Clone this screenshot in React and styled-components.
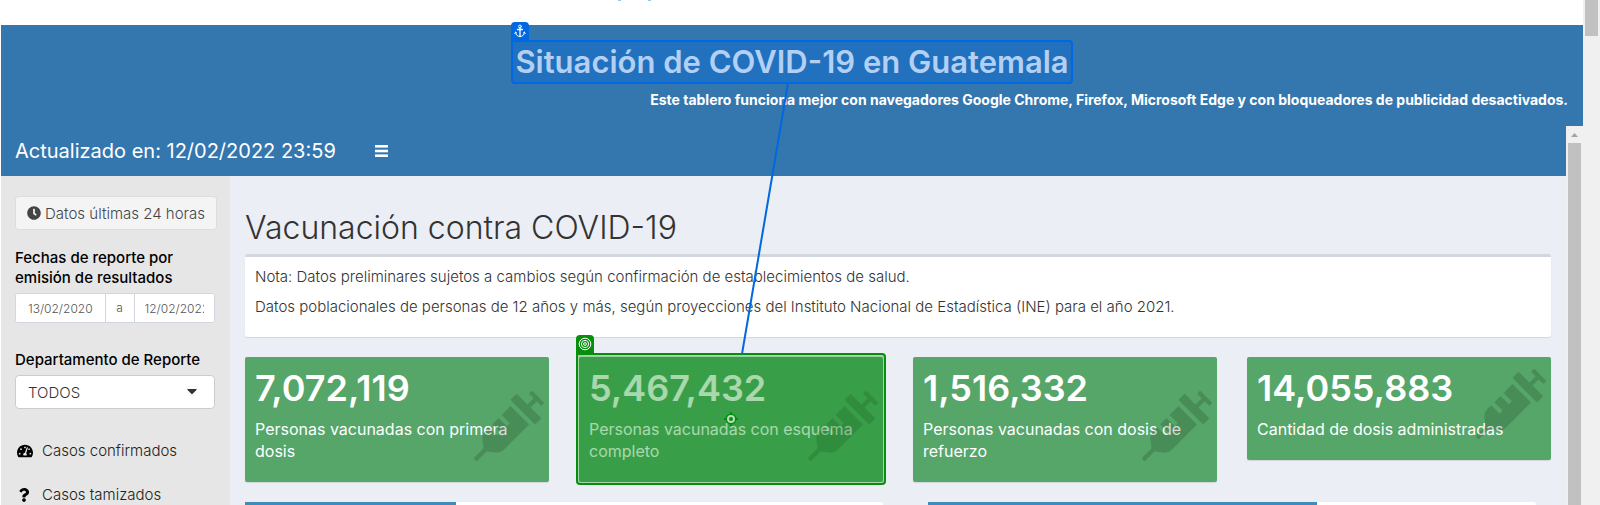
import React from "react";
import styled, { createGlobalStyle } from "styled-components";
import { FaClock, FaTachometerAlt, FaQuestion, FaSyringe, FaCaretDown } from "react-icons/fa";

const GlobalStyle = createGlobalStyle`
  *, *::before, *::after { box-sizing: border-box; }
  html, body, #root { height: 100%; }
  body { margin: 0; overflow: hidden; background: #fff; color: #333; font: 400 15px/20px Inter, "Open Sans", sans-serif; }
  h1, h2, h3, p { margin: 0; }
  button, input, select { font-family: inherit; }
`;

const Page = styled.div`
  position: relative;
  display: flex;
  height: 100vh;
  overflow: hidden;
`;
const Frame = styled.div`
  flex: 1;
  min-width: 0;
  display: flex;
  flex-direction: column;
  margin-left: 1px;
`;
const Strip = styled.div`
  flex: none;
  height: 25px;
  padding-left: 39%;
`;
const Descenders = styled.svg`
  display: block;
  width: 34px;
  height: 1px;
`;
const Banner = styled.header`
  flex: none;
  height: 101px;
  padding: 15px 15px 0;
  background: #3477ae;
  color: #fff;
`;
const TitleRow = styled.div`
  display: flex;
  justify-content: center;
`;
const Anchor = styled.div`
  position: relative;
  padding: 0 2px;
  border: 2px solid #0068e0;
  border-radius: 0 4px 4px 4px;
  background: rgb(0, 104, 224, 0.35);
`;
const Title = styled.h1`
  font-size: 31px;
  line-height: 40px;
  font-weight: 600;
  white-space: nowrap;
  color: #b3d0f2;
`;
const Flag = styled.span`
  position: absolute;
  left: -2px;
  bottom: 100%;
  width: 18px;
  height: 20px;
  padding-bottom: 2px;
  display: flex;
  align-items: center;
  justify-content: center;
  border-radius: 4px 4px 0 0;
  background: ${(p) => p.$color};
`;
const Notice = styled.p`
  margin-top: 6px;
  text-align: right;
  font-size: 14px;
  font-weight: 700;
`;
const Embedded = styled.div`
  flex: 1;
  min-height: 0;
  display: flex;
`;
const Dashboard = styled.div`
  flex: 1;
  min-width: 0;
  display: flex;
  flex-direction: column;
`;
const Navbar = styled.nav`
  flex: none;
  height: 50px;
  display: flex;
  align-items: center;
  gap: 39px;
  padding: 0 14px;
  background: #3477ae;
  color: #fff;
  font-size: 20px;
`;
const MenuButton = styled.button`
  display: flex;
  padding: 0;
  border: 0;
  background: none;
  color: #fff;
`;
const Body = styled.div`
  flex: 1;
  min-height: 0;
  display: flex;
`;
const Sidebar = styled.aside`
  flex: none;
  width: 229px;
  padding: 20px 14px 0;
  background: #e6e6e6;
  overflow: hidden;
`;
const DataButton = styled.button`
  width: 202px;
  height: 34px;
  display: flex;
  align-items: center;
  justify-content: center;
  gap: 4px;
  padding: 0;
  border: 1px solid #ddd;
  border-radius: 3px;
  background: #f4f4f4;
  color: #444;
  font-size: 15px;
  font-weight: 300;
  white-space: nowrap;
  svg { font-size: 14px; }
`;
const Label = styled.label`
  display: block;
  margin-top: ${(p) => p.$top}px;
  margin-bottom: 5px;
  color: #000;
  font-weight: 500;
  white-space: nowrap;
`;
const DateRange = styled.div`
  display: flex;
  height: 30px;
  border: 1px solid #d2d6de;
  border-radius: 3px;
  background: #fff;
  overflow: hidden;
  width: 200px;
`;
const DateInput = styled.input`
  flex: ${(p) => p.$grow} 1 0;
  min-width: 0;
  padding: 0 10px;
  border: 0;
  background: #fff;
  color: #555;
  text-align: center;
  font-size: 12px;
  font-weight: 300;
`;
const Between = styled.span`
  width: 30px;
  border: solid #d2d6de;
  border-width: 0 1px;
  color: #555;
  text-align: center;
  font-size: 12px;
  font-weight: 300;
  line-height: 28px;
`;
const SelectWrap = styled.div`
  position: relative;
  width: 200px;
`;
const Select = styled.select`
  display: block;
  width: 100%;
  height: 34px;
  padding: 0 12px;
  border: 1px solid #ccc;
  border-radius: 4px;
  background: #fff;
  color: #333;
  font-size: 15px;
  font-weight: 300;
  appearance: none;
`;
const Caret = styled(FaCaretDown)`
  position: absolute;
  right: 15px;
  top: 8px;
  font-size: 16px;
  color: #333;
  pointer-events: none;
`;
const Menu = styled.ul`
  margin: 20px 0 0;
  padding: 0;
  list-style: none;
`;
const MenuLink = styled.a`
  display: flex;
  align-items: center;
  gap: 6px;
  height: 44px;
  padding-left: 2px;
  color: #222;
  font-weight: 300;
  text-decoration: none;
`;
const MenuIcon = styled.span`
  width: 19px;
  display: flex;
  color: #000;
  font-size: ${(p) => p.$size}px;
`;
const Content = styled.main`
  flex: 1;
  min-width: 0;
  padding: 32px 15px 0;
  background: #ebeef4;
`;
const Heading = styled.h2`
  margin-bottom: 6px;
  color: #333;
  font-size: 32px;
  line-height: 40px;
  font-weight: 300;
`;
const Note = styled.section`
  height: 83px;
  padding: 10px;
  border-top: 3px solid #d2d6de;
  border-radius: 3px;
  background: #fff;
  box-shadow: 0 1px 1px rgb(0, 0, 0, 0.1);
  color: #333;
  font-weight: 300;
  p + p { margin-top: 10px; }
`;
const Cards = styled.div`
  display: grid;
  grid-template-columns: repeat(4, minmax(0, 1fr));
  gap: 30px;
  align-items: start;
  margin-top: 20px;
`;
const Card = styled.article`
  position: relative;
  padding: 10px 10px 20px;
  border-radius: 2px;
  background: #55a668;
  box-shadow: 0 1px 1px rgb(0, 0, 0, 0.1);
  color: #fff;
`;
const Count = styled.h3`
  margin-bottom: 9px;
  font-size: 36px;
  line-height: 42px;
  font-weight: 600;
`;
const Caption = styled.p`
  font-size: 16px;
  line-height: 22px;
`;
const CardIcon = styled(FaSyringe)`
  position: absolute;
  top: ${(p) => (p.$raised ? 12 : 34)}px;
  right: 5px;
  font-size: 70px;
  color: rgb(0, 0, 0, 0.15);
`;
const Selection = styled.div`
  position: absolute;
  inset: -4px -3px -3px -3px;
  border: 2px solid #078e0d;
  border-radius: 0 4px 4px 4px;
  background: rgb(7, 142, 13, 0.35);
  box-shadow: inset 0 0 0 1px #a5d3aa;
`;
const Center = styled.svg`
  position: absolute;
  left: 50%;
  top: 50%;
  width: 14px;
  height: 14px;
  margin: -7px 0 0 -7px;
`;
const Panels = styled.div`
  display: grid;
  grid-template-columns: minmax(0, 638fr) minmax(0, 608fr);
  gap: 45px;
  margin: 20px 15px 0 0;
`;
const Panel = styled.section`
  display: flex;
  height: 40px;
  border-radius: 3px;
  background: #fff;
`;
const PanelTab = styled.div`
  width: ${(p) => p.$width}%;
  border-top: 3px solid #3c8dbc;
`;
const Track = styled.div`
  flex: none;
  width: 17px;
  padding: 0 2px;
  background: #f0f0f0;
`;
const Thumb = styled.div`
  height: ${(p) => p.$height};
  background: #c1c1c1;
`;
const TrackArrow = styled.svg`
  display: block;
  width: 13px;
  height: 17px;
`;
const Connector = styled.svg`
  position: absolute;
  left: 0;
  top: 0;
  width: 100%;
  height: 100%;
  pointer-events: none;
`;

const cards = [
  { count: "7,072,119", caption: "Personas vacunadas con primera dosis" },
  { count: "5,467,432", caption: "Personas vacunadas con esquema completo", selected: true },
  { count: "1,516,332", caption: "Personas vacunadas con dosis de refuerzo" },
  { count: "14,055,883", caption: "Cantidad de dosis administradas", raised: true },
];

const AnchorIcon = () => (
  <svg width="12" height="14" viewBox="0 0 12 14" fill="none" stroke="#fff" strokeLinecap="round">
    <circle cx="6" cy="2.5" r="1.4" />
    <path d="M6 4V12.500M3.500 5.500H8.500" strokeWidth="1.300" />
    <path d="M1.500 8.200C1.600 10.800 3.500 12.500 6 12.500S10.400 10.800 10.500 8.200M.8 9.300L1.500 8.200L2.600 9M9.400 9L10.500 8.200L11.200 9.300" />
  </svg>
);

const TargetIcon = () => (
  <svg width="14" height="14" viewBox="0 0 14 14" fill="none" stroke="#fff">
    <circle cx="7" cy="7" r="5.8" />
    <circle cx="7" cy="7" r="3.6" />
    <circle cx="7" cy="7" r="1.4" />
  </svg>
);

const BarsIcon = () => (
  <svg width="13" height="12" viewBox="0 0 13 12" fill="currentColor">
    <rect width="13" height="2.6" />
    <rect y="4.7" width="13" height="2.6" />
    <rect y="9.4" width="13" height="2.6" />
  </svg>
);

export default function App() {
  return (
    <>
      <GlobalStyle />
      <Page>
        <Frame>
          <Strip>
            <Descenders viewBox="0 0 34 1" aria-hidden="true">
              <path d="M0 0H3V1H0ZM30 0H33V1H30Z" fill="#8fcbe6" />
            </Descenders>
          </Strip>
          <Banner>
            <TitleRow>
              <Anchor>
                <Flag $color="#0068e0"><AnchorIcon /></Flag>
                <Title>Situación de COVID-19 en Guatemala</Title>
              </Anchor>
            </TitleRow>
            <Notice>Este tablero funciona mejor con navegadores Google Chrome, Firefox, Microsoft Edge y con bloqueadores de publicidad desactivados.</Notice>
          </Banner>
          <Embedded>
            <Dashboard>
              <Navbar>
                <span>Actualizado en: 12/02/2022 23:59</span>
                <MenuButton aria-label="Menú"><BarsIcon /></MenuButton>
              </Navbar>
              <Body>
                <Sidebar>
                  <DataButton><FaClock />Datos últimas 24 horas</DataButton>
                  <Label htmlFor="desde" $top={18}>Fechas de reporte por<br />emisión de resultados</Label>
                  <DateRange>
                    <DateInput id="desde" $grow={91} defaultValue="13/02/2020" />
                    <Between>a</Between>
                    <DateInput aria-label="Hasta" $grow={79} defaultValue="12/02/2022" />
                  </DateRange>
                  <Label htmlFor="departamento" $top={27}>Departamento de Reporte</Label>
                  <SelectWrap>
                    <Select id="departamento"><option>TODOS</option></Select>
                    <Caret />
                  </SelectWrap>
                  <Menu>
                    <li><MenuLink href="#confirmados"><MenuIcon $size={16}><FaTachometerAlt /></MenuIcon>Casos confirmados</MenuLink></li>
                    <li><MenuLink href="#tamizados"><MenuIcon $size={14}><FaQuestion /></MenuIcon>Casos tamizados</MenuLink></li>
                  </Menu>
                </Sidebar>
                <Content>
                  <Heading>Vacunación contra COVID-19</Heading>
                  <Note>
                    <p>Nota: Datos preliminares sujetos a cambios según confirmación de establecimientos de salud.</p>
                    <p>Datos poblacionales de personas de 12 años y más, según proyecciones del Instituto Nacional de Estadística (INE) para el año 2021.</p>
                  </Note>
                  <Cards>
                    {cards.map((c) => (
                      <Card key={c.count}>
                        <Count>{c.count}</Count>
                        <Caption>{c.caption}</Caption>
                        <CardIcon $raised={c.raised} />
                        {c.selected && (
                          <Selection>
                            <Flag $color="#078e0d"><TargetIcon /></Flag>
                            <Center viewBox="0 0 14 14">
                              <path d="M7 0V14M0 7H14" stroke="#078e0d" strokeWidth="2" />
                              <circle cx="7" cy="7" r="5.5" fill="#078e0d" />
                              <circle cx="7" cy="7" r="3" fill="#078e0d" stroke="#b5ddb7" strokeWidth="2" />
                            </Center>
                          </Selection>
                        )}
                      </Card>
                    ))}
                  </Cards>
                  <Panels>
                    <Panel><PanelTab $width={33} /></Panel>
                    <Panel><PanelTab $width={64} /></Panel>
                  </Panels>
                </Content>
              </Body>
            </Dashboard>
            <Track>
              <TrackArrow viewBox="0 0 13 17"><path d="M3 11H10L6.500 7Z" fill="#a3a3a3" /></TrackArrow>
              <Thumb $height="100%" />
            </Track>
          </Embedded>
        </Frame>
        <Track><Thumb $height="36px" /></Track>
        <Connector viewBox="0 0 1600 505" preserveAspectRatio="none">
          <line x1="788" y1="83" x2="742" y2="354" stroke="#0068e0" strokeWidth="2" />
        </Connector>
      </Page>
    </>
  );
}
